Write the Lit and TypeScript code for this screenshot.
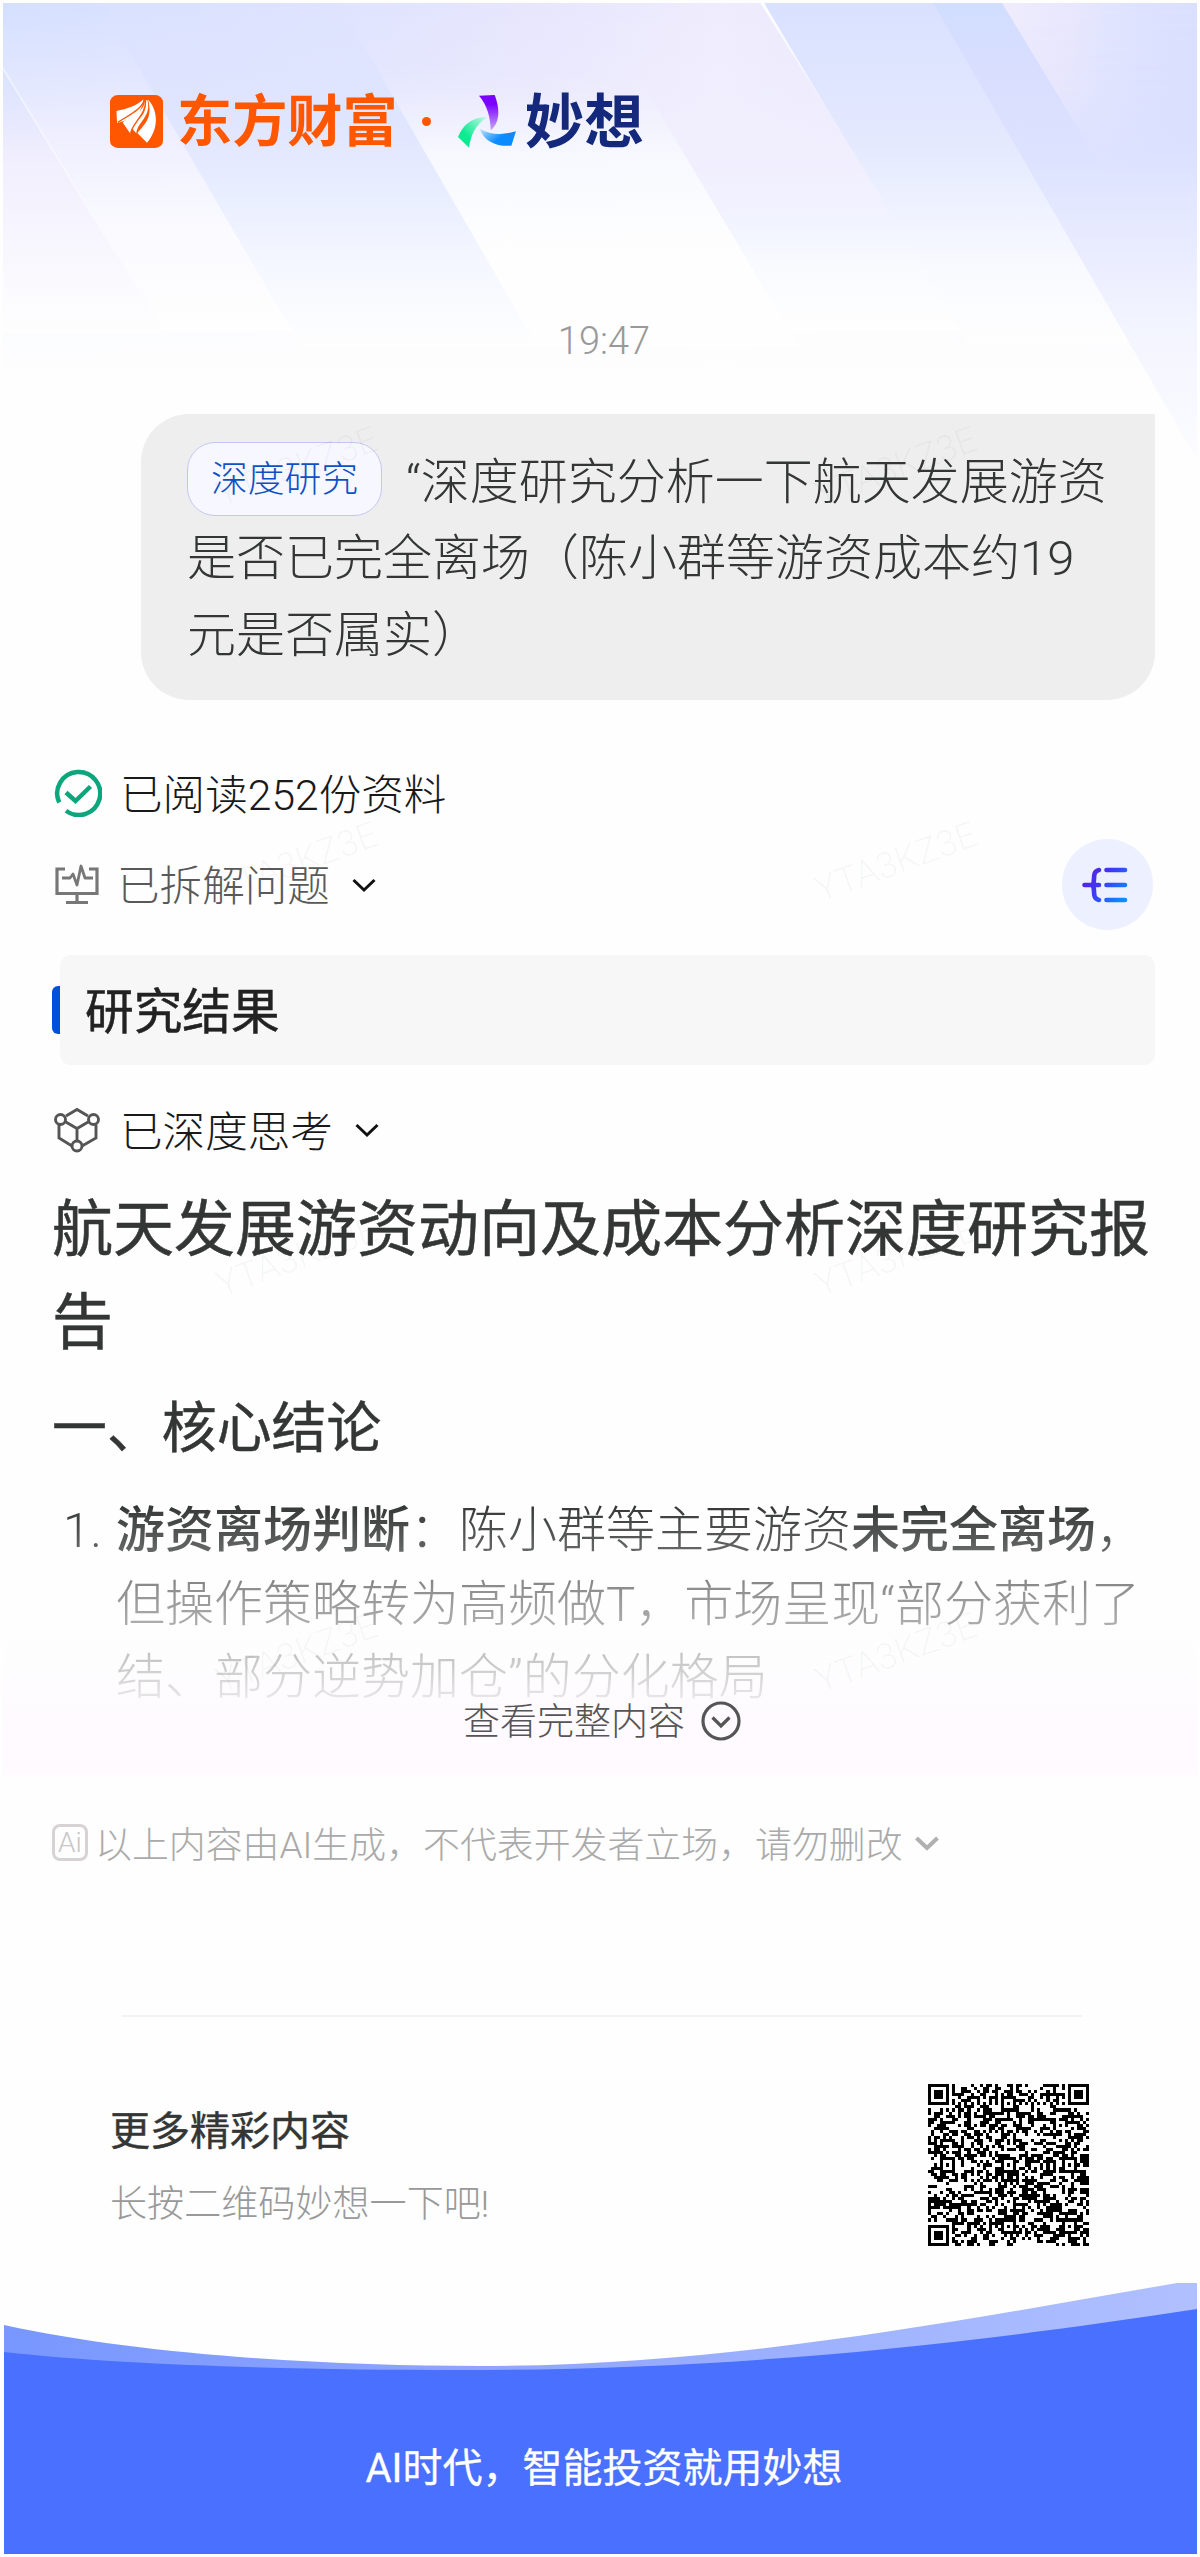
import { LitElement, html, css } from "lit";
import { customElement, property } from "lit/decorators.js";

const QR_SIZE = 53;
const ALIGN = [6, 26, 46];

/** Builds the module path of a version 9 code: finders, timing, alignment and data area. */
function qrPath(): string {
  let seed = 20931;
  const next = () => {
    seed = (seed * 1103515245 + 12345) % 2147483648;
    return seed / 2147483648;
  };
  const ring = (dx: number, dy: number) => Math.max(Math.abs(dx), Math.abs(dy));
  const isDark = (x: number, y: number): boolean => {
    const noise = next() < 0.5;
    for (const [cx, cy] of [[3, 3], [QR_SIZE - 4, 3], [3, QR_SIZE - 4]]) {
      const r = ring(x - cx, y - cy);
      if (r <= 4) return r !== 2 && r !== 4;
    }
    for (const cx of ALIGN) {
      for (const cy of ALIGN) {
        if ((cx === 6 && cy !== 26) || (cy === 6 && cx !== 26)) continue;
        const r = ring(x - cx, y - cy);
        if (r <= 2) return r !== 1;
      }
    }
    if (x === 6 || y === 6) return (x + y) % 2 === 0;
    return noise;
  };
  let d = "";
  for (let y = 0; y < QR_SIZE; y++) {
    for (let x = 0; x < QR_SIZE; x++) {
      if (isDark(x, y)) d += `M${x} ${y}h1v1h-1z`;
    }
  }
  return d;
}

@customElement("chevron-icon")
export class ChevronIcon extends LitElement {
  @property() tone = "#111";
  @property({ type: Number }) weight = 3;
  static styles = css`
    :host { display: block; width: 26px; height: 18px; }
    svg { display: block; width: 26px; height: 18px; }
  `;
  render() {
    return html`<svg viewBox="0 0 26 18" fill="none">
      <path d="M2.500 4L13 14L23.500 4" stroke=${this.tone} stroke-width=${this.weight} />
    </svg>`;
  }
}

@customElement("page-backdrop")
export class PageBackdrop extends LitElement {
  static styles = css`
    :host { display: block; }
    svg { display: block; width: 100%; height: 100%; }
  `;
  render() {
    return html`<svg viewBox="0 0 1194 500" preserveAspectRatio="none">
      <defs>
        <linearGradient id="base" x1="0" x2="1" y1="0" y2="0">
          <stop offset="0" stop-color="#d5e0ff" />
          <stop offset=".2" stop-color="#dce2ff" />
          <stop offset=".45" stop-color="#e7e6fd" />
          <stop offset=".6" stop-color="#efecfd" />
          <stop offset="1" stop-color="#dadffd" />
        </linearGradient>
        <linearGradient id="fade" gradientUnits="userSpaceOnUse" x1="0" x2="0" y1="0" y2="400">
          <stop offset="0" stop-color="#fefefe" stop-opacity="0" />
          <stop offset=".25" stop-color="#fefefe" stop-opacity=".15" />
          <stop offset=".5" stop-color="#fefefe" stop-opacity=".55" />
          <stop offset=".72" stop-color="#fefefe" stop-opacity=".88" />
          <stop offset=".95" stop-color="#fefefe" />
        </linearGradient>
        <linearGradient id="blush" gradientUnits="userSpaceOnUse" x1="0" x2="0" y1="50" y2="330">
          <stop offset="0" stop-color="#e4e2fd" stop-opacity="0" />
          <stop offset=".4" stop-color="#f2effe" />
          <stop offset="1" stop-color="#fefefe" />
        </linearGradient>
        <linearGradient id="light" gradientUnits="userSpaceOnUse" x1="0" x2="0" y1="10" y2="320">
          <stop offset="0" stop-color="#e6e6ff" stop-opacity="0" />
          <stop offset=".4" stop-color="#f1f0ff" stop-opacity=".85" />
          <stop offset=".7" stop-color="#fafaff" />
          <stop offset="1" stop-color="#fefefe" />
        </linearGradient>
        <linearGradient id="mid" gradientUnits="userSpaceOnUse" x1="0" x2="0" y1="0" y2="345">
          <stop offset="0" stop-color="#dce3ff" stop-opacity=".2" />
          <stop offset=".3" stop-color="#dfe4ff" />
          <stop offset=".5" stop-color="#e6ebff" />
          <stop offset=".75" stop-color="#f4f7ff" />
          <stop offset="1" stop-color="#fefefe" />
        </linearGradient>
        <linearGradient id="centre" gradientUnits="userSpaceOnUse" x1="0" x2="0" y1="70" y2="250">
          <stop offset="0" stop-color="#f0eeff" stop-opacity="0" />
          <stop offset=".45" stop-color="#f7f9ff" stop-opacity=".95" />
          <stop offset="1" stop-color="#fefefe" />
        </linearGradient>
        <linearGradient id="pale" gradientUnits="userSpaceOnUse" x1="0" x2="0" y1="60" y2="325">
          <stop offset="0" stop-color="#efecfd" stop-opacity="0" />
          <stop offset=".35" stop-color="#f1eefe" />
          <stop offset=".6" stop-color="#f1f3ff" />
          <stop offset=".75" stop-color="#f8faff" />
          <stop offset="1" stop-color="#fefefe" />
        </linearGradient>
        <linearGradient id="sky" gradientUnits="userSpaceOnUse" x1="0" x2="0" y1="0" y2="340">
          <stop offset="0" stop-color="#d9e1ff" />
          <stop offset=".42" stop-color="#e4e9fe" />
          <stop offset=".6" stop-color="#eef2ff" />
          <stop offset=".78" stop-color="#f9faff" />
          <stop offset="1" stop-color="#fefefe" />
        </linearGradient>
        <linearGradient id="deep" gradientUnits="userSpaceOnUse" x1="0" x2="0" y1="0" y2="457">
          <stop offset="0" stop-color="#d1deff" />
          <stop offset=".15" stop-color="#d9deff" />
          <stop offset=".33" stop-color="#dce2ff" />
          <stop offset=".5" stop-color="#e7eaff" />
          <stop offset=".7" stop-color="#f2f4ff" />
          <stop offset="1" stop-color="#fcfcff" />
        </linearGradient>
        <linearGradient id="cornerfill" x1="0" x2="1" y1="0" y2="0">
          <stop offset="0" stop-color="#f0ecfd" />
          <stop offset=".35" stop-color="#e8e7fd" />
          <stop offset=".7" stop-color="#dde2ff" />
          <stop offset="1" stop-color="#dadffe" />
        </linearGradient>
        <linearGradient id="cornerfade" gradientUnits="userSpaceOnUse" x1="0" x2="0" y1="0" y2="175">
          <stop offset="0" stop-color="#fff" />
          <stop offset=".5" stop-color="#fff" stop-opacity=".8" />
          <stop offset="1" stop-color="#fff" stop-opacity="0" />
        </linearGradient>
        <mask id="cornermask"><rect x="990" width="204" height="175" fill="url(#cornerfade)" /></mask>
        <linearGradient id="line" x1="0" x2="0" y1="0" y2="1">
          <stop offset="0" stop-color="#fff" />
          <stop offset="1" stop-color="#fff" stop-opacity="0" />
        </linearGradient>
      </defs>
      <rect width="1194" height="500" fill="url(#base)" />
      <rect width="1194" height="500" fill="url(#fade)" />
      <path d="M0 50V330H162L0 64Z" fill="url(#blush)" />
      <path d="M0 64V0H98L290 330H162Z" fill="url(#light)" />
      <path d="M98 0H336L535 345H299Z" fill="url(#mid)" />
      <path d="M336 0H591L797 345H535Z" fill="url(#centre)" />
      <path d="M591 0H760L960 330H788Z" fill="url(#pale)" />
      <path d="M760 0H930L1127 340H966Z" fill="url(#sky)" />
      <path d="M930 0H1194V457Z" fill="url(#deep)" />
      <path d="M999 0H1194V175H1105Z" fill="url(#cornerfill)" mask="url(#cornermask)" />
      <path d="M757.500 0H761L846 142Z" fill="url(#line)" />
      <path d="M0 64L112 248L110.500 248L0 67Z" fill="#fff" opacity=".6" />
    </svg>`;
  }
}

@customElement("brand-header")
export class BrandHeader extends LitElement {
  static styles = css`
    :host { display: flex; align-items: center; height: 53px; }
    .mark { display: block; width: 53px; height: 53px; }
    .name, .product {
      font-family: "Noto Sans CJK SC", sans-serif;
      font-weight: 700;
      line-height: 53px;
      white-space: nowrap;
    }
    .name { margin-left: 14px; font-size: 55.200px; color: #ff5600; transform: translateY(-4px); }
    .dot { width: 9px; height: 9px; margin: 0 0 0 24px; border-radius: 50%; background: #ff5600; }
    .swirl { display: block; width: 58px; height: 53px; margin-left: 27px; }
    .product { margin-left: 9px; font-size: 59.500px; color: #14297c; transform: translateY(-4px); }
  `;
  render() {
    return html`
      <svg class="mark" viewBox="0 0 149 159" preserveAspectRatio="none">
        <rect width="149" height="159" rx="22" fill="#ff5600" />
        <path d="M94 13C76 32 48 42 18 48L20 84C54 76 92 60 94 13Z" fill="#fff" />
        <path d="M98 15C98 56 44 70 36 83L58 117C62 78 106 62 98 15Z" fill="#fff" />
        <path d="M98 15C111 62 62 84 60 98L74 115C76 82 118 64 105 15Z" fill="#fff" />
        <path d="M107 14C136 46 138 102 104 143L77 114C94 90 122 70 107 14Z" fill="#fff" />
        <path d="M97 13C90 44 50 62 22 82M100 15C102 62 62 82 58 116" stroke="#ff5600" stroke-width="4" fill="none" />
      </svg>
      <div class="name">东方财富</div>
      <div class="dot"></div>
      <svg class="swirl" viewBox="0 0 163 159" preserveAspectRatio="none">
        <defs>
          <linearGradient id="violet" x1="0" x2="0" y1="0" y2="1">
            <stop offset=".25" stop-color="#7a00ff" />
            <stop offset="1" stop-color="#c9a8fa" />
          </linearGradient>
          <linearGradient id="green" x1="1" x2="0" y1="0" y2="1">
            <stop offset="0" stop-color="#c5f6e6" />
            <stop offset=".65" stop-color="#0ceb92" />
          </linearGradient>
          <linearGradient id="blue" x1="0" x2="1" y1="0" y2=".6">
            <stop offset="0" stop-color="#c6e6ff" />
            <stop offset=".65" stop-color="#0c8bff" />
          </linearGradient>
        </defs>
        <path d="M59 2L103 0C116 36 121 80 92 106C91 68 83 32 59 2Z" fill="url(#violet)" />
        <path d="M81 67C48 92 36 120 31 158L0 126C14 90 38 66 81 67Z" fill="url(#green)" />
        <path d="M61 101C92 120 124 121 163 109L150 152C108 155 74 140 61 101Z" fill="url(#blue)" />
      </svg>
      <div class="product">妙想</div>
    `;
  }
}

@customElement("question-bubble")
export class QuestionBubble extends LitElement {
  static styles = css`
    :host {
      display: block;
      box-sizing: border-box;
      height: 286px;
      padding: 30.500px 40px 0 46px;
      border-radius: 48px 0 48px 48px;
      background: #eee;
      color: #333634;
      font-size: 49px;
      font-weight: 300;
      line-height: 76.500px;
    }
    .line { display: flex; align-items: center; height: 76.500px; white-space: nowrap; }
    .tag {
      box-sizing: border-box;
      width: 195px;
      height: 74px;
      margin: -8px 24px 0 0;
      border: 1.500px solid #c3c6f1;
      border-radius: 28px;
      background: #f6f7ff;
      color: #0f50c4;
      font-size: 36.800px;
      line-height: 73px;
      text-align: center;
    }
  `;
  render() {
    return html`
      <div class="line"><span class="tag">深度研究</span><span>“深度研究分析一下航天发展游资</span></div>
      <div class="line">是否已完全离场（陈小群等游资成本约19</div>
      <div class="line">元是否属实）</div>
    `;
  }
}

@customElement("app-root")
export class AppRoot extends LitElement {
  static styles = css`
    :host {
      display: block;
      position: relative;
      box-sizing: border-box;
      width: 1200px;
      height: 2557px;
      padding: 0 3px 3px;
      overflow: hidden;
      background: #fefefe;
      font-family: Roboto, "Noto Sans CJK SC", sans-serif;
      font-weight: 300;
      color: #333634;
      white-space: nowrap;
    }
    .backdrop { position: absolute; left: 3px; top: 3px; width: 1194px; height: 500px; }
    .page { position: relative; display: flex; flex-direction: column; }
    .brand { margin: 95px 0 0 107px; }
    .time { margin-top: 173px; height: 40px; padding-left: 8px; font-size: 38px; line-height: 40px; text-align: center; color: #999; }
    .question { margin: 53px 42px 0 138px; }
    .status { display: flex; align-items: center; padding-left: 49.500px; font-size: 42.600px; }
    .status svg { display: block; }
    .status span { transform: translateY(-2.500px); }
    .read { height: 46px; margin-top: 70px; color: #191919; }
    .split { height: 91px; margin-top: 23px; padding-right: 44px; color: #595959; }
    .think { height: 46px; margin-top: 42px; color: #191919; }
    .read span, .think span { margin-left: 18.500px; }
    .split span { margin-left: 14.500px; }
    .status chevron-icon { margin-left: 21.500px; }
    .outline { width: 91px; height: 91px; margin-left: auto; border-radius: 50%; background: #edf0fe; display: grid; place-items: center; }
    .outline svg { margin-left: -5px; }
    .section { display: flex; align-items: center; height: 110px; margin: 25px 42px 0 49px; }
    .accent { width: 8px; height: 48px; border-radius: 6px 0 0 6px; background: #0050dc; }
    .title { flex: 1; height: 110px; padding-left: 25px; border-radius: 11px; background: #f7f7f7; color: #222; font-size: 48.700px; font-weight: 400; -webkit-text-stroke: .5px #222; line-height: 115px; }
    h1, h2 { margin: 0 0 0 49px; font-weight: 400; -webkit-text-stroke: .5px #333634; }
    h1 { margin-top: 31px; font-size: 61px; line-height: 93px; white-space: normal; width: 1120px; }
    h2 { margin-top: 28px; font-size: 54.900px; line-height: 60px; }
    .report { position: relative; height: 282px; margin-top: 35px; }
    .item { display: flex; padding-top: 1px; font-size: 49px; line-height: 73.500px; }
    .index { width: 53px; padding-left: 60px; }
    b { font-weight: 500; }
    .veil {
      position: absolute;
      inset: 0;
      display: flex;
      justify-content: center;
      align-items: flex-end;
      gap: 16px;
      box-sizing: border-box;
      padding: 0 0 34px 4px;
      background: linear-gradient(rgba(254, 254, 254, 0) 4%, rgba(254, 254, 254, .5) 38%, rgba(254, 253, 254, .76) 62%, #fefaff 82%);
      color: #555;
      font-size: 37px;
      line-height: 38px;
    }
    .veil span { transform: translateY(1px); }
    .veil svg { display: block; }
    .notice { display: flex; align-items: center; height: 38px; margin: 49px 0 0 49px; color: #aaa; font-size: 36.900px; }
    .notice span { transform: translateY(-1px); }
    .ai { box-sizing: border-box; width: 36px; height: 37px; margin-right: 7px; border: 3px solid #d7d3d4; border-radius: 8px; color: #c8c6c6; font-size: 28px; line-height: 32px; text-align: center; }
    .notice chevron-icon { margin-left: 11px; }
    .rule { height: 2px; margin: 153px 115px 0 119px; background: #f2f2f2; }
    .promo { display: flex; justify-content: space-between; height: 162px; margin: 67px 108px 0 107px; }
    .lead { margin-top: 20px; color: #333634; font-size: 40px; font-weight: 400; -webkit-text-stroke: .4px #333634; line-height: 56px; }
    .hint { margin-top: 17px; color: #999; font-size: 37.100px; line-height: 56px; }
    .qr { display: block; width: 161px; height: 162px; }
    .footer { position: relative; height: 271px; margin-top: 37px; display: flex; justify-content: center; }
    .wave { position: absolute; left: 1px; top: 0; width: 1193px; height: 271px; }
    .slogan { position: relative; margin-top: 158px; padding-left: 8px; color: #fff; font-size: 40px; font-weight: 400; -webkit-text-stroke: .3px #fff; line-height: 56px; }
    .stamp { position: absolute; width: 200px; margin: -25px 0 0 -100px; font-size: 36px; font-weight: 300; line-height: 50px; text-align: center; color: rgba(0, 0, 0, .04); transform: rotate(-20deg); pointer-events: none; }
  `;

  private stamps = [467, 862, 1257, 1653].flatMap((y) => [297, 896].map((x) => ({ x, y })));

  render() {
    return html`
      <page-backdrop class="backdrop"></page-backdrop>
      <div class="page">
        <brand-header class="brand"></brand-header>
        <div class="time">19:47</div>
        <question-bubble class="question"></question-bubble>

        <div class="status read">
          <svg width="49" height="48" viewBox="0 0 49 48" fill="none" stroke="#0da57b" stroke-width="4.500">
            <path d="M6.200 33.500A21.500 21.500 0 1 1 13 41.800" />
            <path d="M13 23.500L22.500 32L37.500 17.500" />
          </svg>
          <span>已阅读252份资料</span>
        </div>

        <div class="status split">
          <svg width="50" height="44" viewBox="0 0 50 44" fill="none" stroke="#777" stroke-width="3.200">
            <path d="M12 6H4V30.500H44V6H36M24 31V39M13 39.500H35" />
            <path d="M9 15H17L20 11L24 22L28 3L32 15H40" stroke-width="2.800" stroke-linejoin="round" />
          </svg>
          <span>已拆解问题</span>
          <chevron-icon></chevron-icon>
          <div class="outline">
            <svg width="46" height="38" viewBox="0 0 46 38" fill="none" stroke="url(#flow)" stroke-width="4.600" stroke-linecap="round">
              <defs>
                <linearGradient id="flow" gradientUnits="userSpaceOnUse" x1="4" y1="6" x2="40" y2="34">
                  <stop offset="0" stop-color="#5a1fe0" />
                  <stop offset=".45" stop-color="#3b3cf4" />
                  <stop offset="1" stop-color="#0d8cff" />
                </linearGradient>
              </defs>
              <path d="M17 4C9 6 14 15 10.500 19C14 23 9 32 17 34M2.500 19H17M24.500 4.010L43 4M24.500 19.010L43 19M24.500 34.010L43 34" />
            </svg>
          </div>
        </div>

        <div class="section">
          <div class="accent"></div>
          <div class="title">研究结果</div>
        </div>

        <div class="status think">
          <svg width="49" height="46" viewBox="0 0 49 46" fill="none" stroke="#555" stroke-width="2.900">
            <path d="M13 9L24 2.500L35 9M12 14.500L24 21.500L36 14.500M24 21.500V35M6 18V31L19 39M43 18V31L29 39" />
            <circle cx="7.500" cy="12.500" r="5" />
            <circle cx="40.500" cy="12.500" r="5" />
            <circle cx="24" cy="39" r="5" />
          </svg>
          <span>已深度思考</span>
          <chevron-icon></chevron-icon>
        </div>

        <h1>航天发展游资动向及成本分析深度研究报<br />告</h1>
        <h2>一、核心结论</h2>

        <div class="report">
          <div class="item">
            <div class="index">1.</div>
            <div>
              <b>游资离场判断</b>：陈小群等主要游资<b>未完全离场</b>，<br />
              但操作策略转为高频做T，市场呈现“部分获利了<br />
              结、部分逆势加仓”的分化格局
            </div>
          </div>
          <div class="veil">
            <span>查看完整内容</span>
            <svg width="40" height="40" viewBox="0 0 40 40" fill="none" stroke="#555" stroke-width="3.200">
              <circle cx="20" cy="20" r="18" />
              <path d="M11.500 16.500L20 25L28.500 16.500" />
            </svg>
          </div>
        </div>

        <div class="notice">
          <span class="ai">Ai</span>
          <span>以上内容由AI生成，不代表开发者立场，请勿删改</span>
          <chevron-icon tone="#b0b0b0" .weight=${4}></chevron-icon>
        </div>

        <div class="rule"></div>

        <div class="promo">
          <div>
            <div class="lead">更多精彩内容</div>
            <div class="hint">长按二维码妙想一下吧!</div>
          </div>
          <svg class="qr" viewBox="0 0 53 53" preserveAspectRatio="none">
            <path d=${qrPath()} fill="#000" shape-rendering="crispEdges" />
          </svg>
        </div>

        <div class="footer">
          <svg class="wave" viewBox="4 2283 1193 271" preserveAspectRatio="none">
            <defs>
              <linearGradient id="crest" x1="0" x2="1" y1="0" y2="0">
                <stop offset="0" stop-color="#7897ff" />
                <stop offset=".4" stop-color="#8ea5ff" />
                <stop offset="1" stop-color="#b0c0ff" />
              </linearGradient>
            </defs>
            <path d="M4 2325C140 2355 330 2366 480 2366C720 2366 940 2324 1177 2283H1197V2400H4Z" fill="url(#crest)" />
            <path d="M4 2352C130 2366 310 2370 460 2370C710 2370 930 2350 1197 2309V2554H4Z" fill="#4a70ff" />
          </svg>
          <div class="slogan">AI时代，智能投资就用妙想</div>
        </div>
      </div>
      ${this.stamps.map((s) => html`<div class="stamp" style="left:${s.x}px;top:${s.y}px">YTA3KZ3E</div>`)}
    `;
  }
}
